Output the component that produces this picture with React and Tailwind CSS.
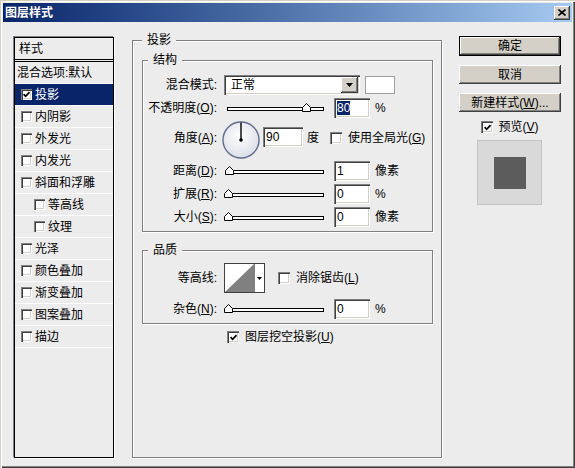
import React from "react";

const sunken =
  "shadow-[inset_1px_1px_0_#808080,inset_2px_2px_0_#404040,inset_-1px_-1px_0_#ffffff,inset_-2px_-2px_0_#d4d0c8]";
const raised =
  "shadow-[inset_-1px_-1px_0_#404040,inset_1px_1px_0_#ffffff,inset_-2px_-2px_0_#808080,inset_2px_2px_0_#d4d0c8]";
const etched = "border border-[#808080] shadow-[inset_1px_1px_0_#ffffff,1px_1px_0_#ffffff]";

const Check = ({ checked, small }) => (
  <span
    className={`${small ? "w-[11px] h-[11px]" : "w-[12px] h-[12px]"} shrink-0 bg-white flex items-center justify-center ${sunken}`}
  >
    {checked && (
      <svg width="7" height="7" viewBox="0 0 7 7">
        <path d="M0.6 3.2 L2.6 5.3 L6.5 1.2" fill="none" stroke="#000" strokeWidth="1.7" />
      </svg>
    )}
  </span>
);

const Slider = ({ value }) => (
  <div className="relative w-[104px] h-[10px] ml-[7px] shrink-0">
    <div className="absolute left-[3px] top-[4px] w-[97px] h-[4px] bg-white border border-black" />
    <svg className="absolute top-0" style={{ left: value * 97 }} width="9" height="9" viewBox="0 0 9 9">
      <path d="M4.5 0.5 L8.5 4.5 L8.5 8.5 L0.5 8.5 L0.5 4.5 Z" fill="#fff" stroke="#000" />
    </svg>
  </div>
);

const Field = ({ value, selected }) => (
  <div className={`ml-[6px] w-[36px] h-[20px] shrink-0 bg-white flex items-center pl-[3px] ${sunken}`}>
    <span className={selected ? "bg-[#0a246a] text-white leading-[14px]" : "leading-[14px]"}>{value}</span>
  </div>
);

const Label = ({ text, k, className = "" }) => (
  <span className={`block w-[74px] shrink-0 text-right whitespace-nowrap ${className}`}>
    {text}
    {k && (
      <>
        (<span className="underline">{k}</span>)
      </>
    )}
    :
  </span>
);

const SliderRow = ({ text, k, value, unit, selected, top }) => (
  <div className={`flex items-center h-[20px] ${top}`}>
    <Label text={text} k={k} />
    <Slider value={value / 100} />
    <Field value={value} selected={selected} />
    <span className="ml-[5px]">{unit}</span>
  </div>
);

const items = [
  { name: "混合选项:默认", plain: true },
  { name: "投影", checked: true, selected: true },
  { name: "内阴影" },
  { name: "外发光" },
  { name: "内发光" },
  { name: "斜面和浮雕" },
  { name: "等高线", indent: true },
  { name: "纹理", indent: true },
  { name: "光泽" },
  { name: "颜色叠加" },
  { name: "渐变叠加" },
  { name: "图案叠加" },
  { name: "描边" },
];

const StyleList = () => (
  <div className="mt-[15px] w-[100px] h-[421px] shrink-0 border border-black shadow-[-1px_-1px_0_#808080,1px_1px_0_#ffffff]">
    <div className="h-[24px] pl-[4px] flex items-center border-b-[3px] border-double border-black">样式</div>
    {items.map((it) => (
      <div
        key={it.name}
        className={`h-[22px] flex items-center border-b border-white whitespace-nowrap ${
          it.selected ? "bg-[#0a246a] text-white" : ""
        } ${it.plain ? "pl-[2px]" : it.indent ? "pl-[19px]" : "pl-[6px]"}`}
      >
        {!it.plain && <Check small checked={it.checked} />}
        <span className={it.plain ? "" : "ml-[3px]"}>{it.name}</span>
      </div>
    ))}
  </div>
);

const Dial = () => (
  <svg className="ml-[5px] shrink-0" width="38" height="38" viewBox="0 0 38 38">
    <defs>
      <radialGradient id="dialFill" cx="45%" cy="40%" r="65%">
        <stop offset="0" stopColor="#ffffff" />
        <stop offset="1" stopColor="#d9dce6" />
      </radialGradient>
    </defs>
    <circle cx="19" cy="19" r="18" fill="url(#dialFill)" stroke="#5f6c8c" strokeWidth="1.4" />
    <line x1="19" y1="19" x2="19" y2="1.5" stroke="#000" strokeWidth="1.4" />
    <circle cx="19" cy="19" r="1.8" fill="#000" />
  </svg>
);

const Structure = () => (
  <fieldset className={`mt-[4px] ml-[9px] w-[291px] pb-[4px] ${etched}`}>
    <legend className="ml-[5px] px-[5px] leading-[16px] bg-[#ececec]">结构</legend>
    <div className="flex items-center h-[20px] mt-[7px]">
      <Label text="混合模式" />
      <div className={`ml-[7px] w-[136px] h-[20px] shrink-0 bg-white flex items-center pl-[7px] ${sunken}`}>
        <span className="flex-1">正常</span>
        <div className={`w-[17px] h-[16px] mr-[2px] bg-[#d4d0c8] flex items-center justify-center ${raised}`}>
          <svg width="7" height="4" viewBox="0 0 7 4">
            <path d="M0 0 H7 L3.5 4 Z" fill="#000" />
          </svg>
        </div>
      </div>
      <div className="ml-[5px] w-[30px] h-[18px] bg-white border border-[#a0a0a0]" />
    </div>
    <SliderRow text="不透明度" k="O" value={80} unit="%" selected top="mt-[3px]" />
    <div className="flex items-start h-[38px] mt-[3px]">
      <Label text="角度" k="A" className="mt-[9px]" />
      <Dial />
      <div className={`ml-[3px] mt-[6px] w-[40px] h-[20px] shrink-0 bg-white flex items-center pl-[3px] ${sunken}`}>
        90
      </div>
      <span className="ml-[4px] mt-[9px]">度</span>
      <span className="ml-[11px] mt-[11px]">
        <Check />
      </span>
      <span className="ml-[6px] mt-[9px] whitespace-nowrap">
        使用全局光(<span className="underline">G</span>)
      </span>
    </div>
    <SliderRow text="距离" k="D" value={1} unit="像素" top="mt-[2px]" />
    <SliderRow text="扩展" k="R" value={0} unit="%" top="mt-[3px]" />
    <SliderRow text="大小" k="S" value={0} unit="像素" top="mt-[3px]" />
  </fieldset>
);

const Quality = () => (
  <fieldset className={`mt-[10px] ml-[9px] w-[291px] pb-[4px] ${etched}`}>
    <legend className="ml-[5px] px-[5px] leading-[16px] bg-[#ececec]">品质</legend>
    <div className="flex items-center h-[30px] mt-[5px]">
      <Label text="等高线" />
      <div className="ml-[7px] w-[41px] h-[30px] shrink-0 bg-white border border-[#404040] flex">
        <svg width="29" height="28" viewBox="0 0 29 28">
          <path d="M0 28 L29 0 L29 28 Z" fill="#808080" />
        </svg>
        <div className="flex-1 border-l border-[#808080] flex items-center justify-center">
          <svg width="5" height="3" viewBox="0 0 5 3">
            <path d="M0 0 H5 L2.5 3 Z" fill="#000" />
          </svg>
        </div>
      </div>
      <span className="ml-[13px]">
        <Check />
      </span>
      <span className="ml-[6px] whitespace-nowrap">
        消除锯齿(<span className="underline">L</span>)
      </span>
    </div>
    <SliderRow text="杂色" k="N" value={0} unit="%" top="mt-[6px]" />
  </fieldset>
);

const DropShadowPanel = () => (
  <fieldset className={`ml-[18px] mt-[10px] w-[310px] h-[426px] shrink-0 ${etched}`}>
    <legend className="ml-[9px] px-[5px] leading-[16px] bg-[#ececec]">投影</legend>
    <Structure />
    <Quality />
    <div className="mt-[5px] ml-[94px] h-[16px] flex items-center">
      <Check checked />
      <span className="ml-[6px] whitespace-nowrap">
        图层挖空投影(<span className="underline">U</span>)
      </span>
    </div>
  </fieldset>
);

const Side = () => (
  <div className="ml-[17px] mt-[14px] w-[102px] shrink-0 flex flex-col">
    <button className={`w-[102px] h-[20px] bg-[#d4d0c8] border border-black flex items-center justify-center ${raised}`}>
      确定
    </button>
    <button className={`mt-[9px] w-[102px] h-[19px] bg-[#d4d0c8] flex items-center justify-center ${raised}`}>
      取消
    </button>
    <button className={`mt-[9px] w-[102px] h-[19px] bg-[#d4d0c8] flex items-center justify-center whitespace-nowrap ${raised}`}>
      新建样式(<span className="underline">W</span>)...
    </button>
    <div className="mt-[7px] h-[16px] flex items-center justify-center">
      <Check checked />
      <span className="ml-[5px]">
        预览(<span className="underline">V</span>)
      </span>
    </div>
    <div className="mt-[5px] ml-[18px] w-[65px] h-[65px] bg-[#d9d9d9] border border-[#c4c4c4] flex items-center justify-center">
      <div className="w-[32px] h-[32px] bg-[#5c5c5c]" />
    </div>
  </div>
);

export default function App() {
  return (
    <div className="w-[575px] h-[468px] overflow-hidden bg-[#ececec] flex flex-col text-[12px] leading-[16px] text-black [font-family:'Liberation_Sans','Noto_Sans_CJK_SC',sans-serif] shadow-[inset_1px_1px_0_#d4d0c8,inset_2px_2px_0_#ffffff,inset_-1px_-1px_0_#404040,inset_-2px_-2px_0_#808080]">
      <div className="mx-[3px] mt-[3px] h-[19px] shrink-0 flex items-center bg-linear-to-r from-[#0a246a] to-[#a6caf0]">
        <span className="ml-[2px] text-white font-bold">图层样式</span>
        <div className={`ml-auto mr-[2px] w-[16px] h-[14px] bg-[#d4d0c8] flex items-center justify-center ${raised}`}>
          <svg width="8" height="7" viewBox="0 0 8 7">
            <path d="M0.5 0.5 L7.5 6.5 M7.5 0.5 L0.5 6.5" stroke="#000" strokeWidth="1.6" />
          </svg>
        </div>
      </div>
      <div className="flex items-start pl-[14px]">
        <StyleList />
        <DropShadowPanel />
        <Side />
      </div>
    </div>
  );
}
